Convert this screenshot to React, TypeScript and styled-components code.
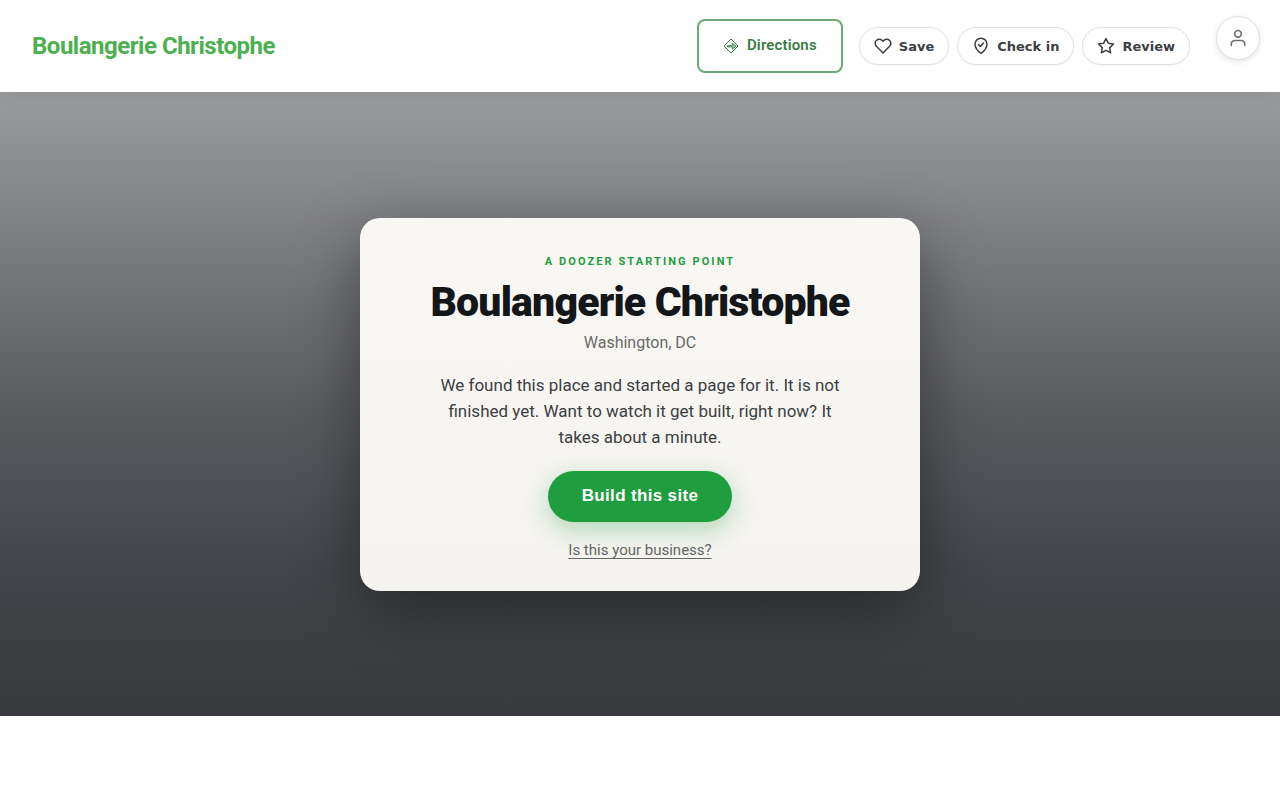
import React from "react";
import styled, { createGlobalStyle } from "styled-components";

const GlobalStyle = createGlobalStyle`
  *, *::before, *::after { box-sizing: border-box; }
  body {
    margin: 0;
    background: #fff;
    color: #3c4043;
    font-family: Roboto, "Liberation Sans", sans-serif;
    font-size: 16px;
  }
  button { font: inherit; cursor: pointer; }
`;

const Header = styled.header`
  position: relative;
  z-index: 1;
  display: flex;
  align-items: center;
  justify-content: space-between;
  min-height: 92px;
  padding: 16px 20px 16px 32px;
  background: #fff;
  box-shadow: 0 2px 16px rgba(0, 0, 0, 0.08);
`;

const Brand = styled.a`
  color: #4caf50;
  font-size: 24px;
  font-weight: 700;
  line-height: 32px;
  letter-spacing: -0.02em;
  text-decoration: none;
`;

const Actions = styled.nav`
  display: flex;
  align-items: center;
  align-self: stretch;
  gap: 16px;
`;

const DirectionsLink = styled.a`
  display: flex;
  align-items: center;
  gap: 8px;
  height: 54px;
  padding: 0 24px 2px;
  border: 2px solid #6fa876;
  border-radius: 8px;
  color: #3a7d44;
  font-size: 15px;
  font-weight: 600;
  letter-spacing: 0.01em;
  text-decoration: none;
`;

const PillGroup = styled.div`
  display: flex;
  gap: 8px;
`;

const Pill = styled.button`
  display: flex;
  align-items: center;
  gap: 7px;
  height: 38px;
  padding: 0 14px;
  border: 1px solid #dfe1e4;
  border-radius: 19px;
  background: #fff;
  box-shadow: 0 1px 2px rgba(0, 0, 0, 0.04);
  color: #3c4043;
  font-family: "DejaVu Sans", sans-serif;
  font-size: 13px;
  font-weight: 600;
`;

const AccountButton = styled.button`
  display: grid;
  place-items: center;
  align-self: flex-start;
  width: 44px;
  height: 44px;
  margin-left: 10px;
  padding: 0;
  border: 1px solid #e0e0e0;
  border-radius: 50%;
  background: #fff;
  box-shadow: 0 2px 6px rgba(0, 0, 0, 0.1);
  color: #6b7075;
`;

const Hero = styled.main`
  display: flex;
  align-items: center;
  justify-content: center;
  min-height: 78vh;
  padding: 48px 24px;
  background: linear-gradient(180deg, #9a9b9d 0%, #5b5c60 50%, #505357 60%, #43464a 75%, #37393c 100%);
`;

const Card = styled.section`
  display: flex;
  flex-direction: column;
  align-items: center;
  width: 100%;
  max-width: 560px;
  padding: 36px 40px 31px;
  border-radius: 20px;
  background: linear-gradient(180deg, #f8f7f3, #f5f4f0);
  box-shadow: 0 20px 64px rgba(0, 0, 0, 0.4);
  text-align: center;
`;

const Eyebrow = styled.p`
  margin: 0 0 8px;
  color: #1f9d3f;
  font-size: 11px;
  font-weight: 700;
  line-height: 16px;
  letter-spacing: 0.19em;
  text-transform: uppercase;
`;

const Title = styled.h1`
  margin: 0 0 7px;
  color: #14171a;
  font-size: 41px;
  font-weight: 900;
  line-height: 49px;
  letter-spacing: -0.02em;
`;

const Place = styled.p`
  margin: 0 0 20px;
  color: #6a6a6a;
  font-size: 16px;
  line-height: 18px;
`;

const Message = styled.p`
  max-width: 420px;
  margin: 0 0 21px;
  font-size: 17px;
  line-height: 26px;
`;

const BuildButton = styled.button`
  height: 51px;
  margin-bottom: 18px;
  padding: 0 34px;
  border: 0;
  border-radius: 26px;
  background: #1f9d3f;
  box-shadow: 0 8px 24px rgba(31, 157, 63, 0.32);
  color: #fff;
  font-family: "Liberation Sans", Arial, sans-serif;
  font-size: 17px;
  font-weight: 700;
  letter-spacing: 0.02em;
`;

const OwnerLink = styled.a`
  color: #666;
  font-size: 15px;
  line-height: 20px;
  text-underline-offset: 3px;
  text-decoration-skip-ink: none;
`;

const LineIcon = styled.svg.attrs({
  viewBox: "0 0 24 24",
  fill: "none",
  stroke: "currentColor",
  strokeWidth: 2,
  strokeLinecap: "round",
  strokeLinejoin: "round",
  "aria-hidden": true,
})<{ $size: number }>`
  width: ${({ $size }) => $size}px;
  height: ${({ $size }) => $size}px;
`;

const DirectionsIcon = () => (
  <svg width="16" height="18" viewBox="0 0 16 18" fill="none" stroke="currentColor" aria-hidden="true">
    <path d="M8 3 15 10 8 17 1 10Z" strokeLinejoin="round" />
    <path d="M4.500 9.500H9.500V7.200L13 10.200 9.500 13.200V11H4.500Z" strokeWidth="0.800" fill="currentColor" fillOpacity="0.5" />
  </svg>
);

const HeartIcon = () => (
  <LineIcon $size={18}>
    <path d="M20.84 4.61a5.5 5.5 0 0 0-7.78 0L12 5.67l-1.06-1.06a5.5 5.5 0 0 0-7.78 7.78l1.06 1.06L12 21.23l7.78-7.78 1.06-1.06a5.5 5.5 0 0 0 0-7.78z" />
  </LineIcon>
);

const CheckInIcon = () => (
  <LineIcon $size={18}>
    <path d="M12 22s8-6.5 8-12.5a8 8 0 0 0-16 0C4 15.5 12 22 12 22Z" />
    <path d="m8.500 10 2.500 2.500 4.500-4.500" />
  </LineIcon>
);

const StarIcon = () => (
  <LineIcon $size={18}>
    <path d="M12 2 15.090 8.260 22 9.270 17 14.140 18.180 21.020 12 17.770 5.820 21.020 7 14.140 2 9.270 8.910 8.260Z" />
  </LineIcon>
);

const PersonIcon = () => (
  <LineIcon $size={20}>
    <path d="M20 21v-2a4 4 0 0 0-4-4H8a4 4 0 0 0-4 4v2" />
    <circle cx="12" cy="7" r="4" />
  </LineIcon>
);

export default function App() {
  return (
    <>
      <GlobalStyle />
      <Header>
        <Brand href="#">Boulangerie Christophe</Brand>
        <Actions aria-label="Place actions">
          <DirectionsLink href="#directions">
            <DirectionsIcon />
            Directions
          </DirectionsLink>
          <PillGroup>
            <Pill type="button"><HeartIcon />Save</Pill>
            <Pill type="button"><CheckInIcon />Check in</Pill>
            <Pill type="button"><StarIcon />Review</Pill>
          </PillGroup>
          <AccountButton type="button" aria-label="Account">
            <PersonIcon />
          </AccountButton>
        </Actions>
      </Header>
      <Hero>
        <Card>
          <Eyebrow>A Doozer starting point</Eyebrow>
          <Title>Boulangerie Christophe</Title>
          <Place>Washington, DC</Place>
          <Message>
            We found this place and started a page for it. It is not finished yet. Want to watch it
            get built, right now? It takes about a minute.
          </Message>
          <BuildButton type="button">Build this site</BuildButton>
          <OwnerLink href="#claim">Is this your business?</OwnerLink>
        </Card>
      </Hero>
    </>
  );
}
